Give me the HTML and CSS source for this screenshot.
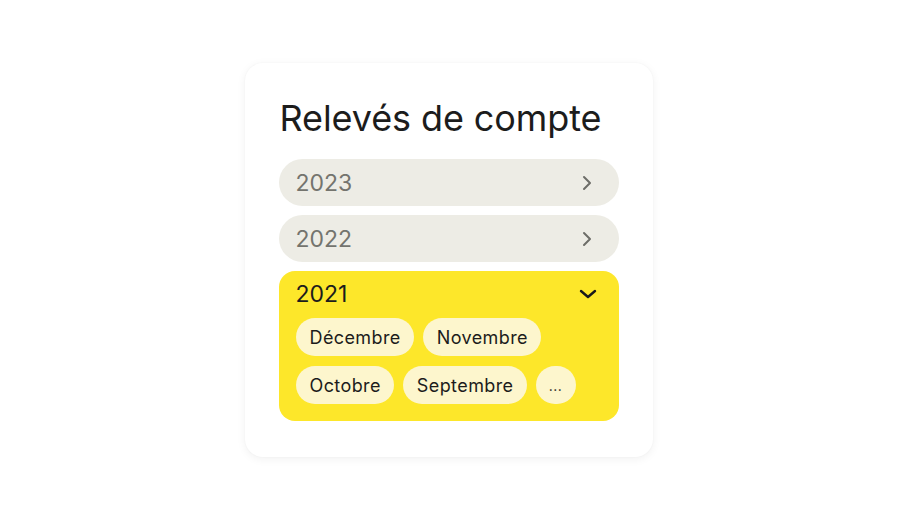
FILE: index.html
```html
<!DOCTYPE html>
<html lang="fr">
<head>
<meta charset="utf-8">
<link rel="stylesheet" href="styles.css">
</head>
<body>
<div class="stage">
  <div class="card">
    <h1 class="title">Relevés de compte</h1>
    <div class="list">
      <div class="row">
        <span class="year">2023</span>
        <svg class="chev" width="14" height="16" viewBox="0 0 14 16"><path d="M4 2 L10 8 L4 14" fill="none" stroke="#6d6d68" stroke-width="2" stroke-linecap="round" stroke-linejoin="round"/></svg>
      </div>
      <div class="row">
        <span class="year">2022</span>
        <svg class="chev" width="14" height="16" viewBox="0 0 14 16"><path d="M4 2 L10 8 L4 14" fill="none" stroke="#6d6d68" stroke-width="2" stroke-linecap="round" stroke-linejoin="round"/></svg>
      </div>
      <div class="open">
        <div class="open-head">
          <span class="year dark">2021</span>
          <svg class="chev-down" width="20" height="12" viewBox="0 0 20 12"><path d="M3 3 L10 9 L17 3" fill="none" stroke="#1a1a1a" stroke-width="2.4" stroke-linecap="round" stroke-linejoin="round"/></svg>
        </div>
        <div class="chips">
          <span class="chip">Décembre</span>
          <span class="chip">Novembre</span>
          <span class="chip">Octobre</span>
          <span class="chip">Septembre</span>
          <span class="chip more">...</span>
        </div>
      </div>
    </div>
  </div>
</div>
</body>
</html>
```
FILE: styles.css
```css
html, body {
  margin: 0;
  padding: 0;
  background: #ffffff;
}
body {
  width: 900px;
  height: 514px;
  font-family: Inter, "Liberation Sans", sans-serif;
  color: #1c1c1c;
}
.stage {
  display: flex;
  justify-content: center;
  padding-top: 63px;
}
.card {
  width: 408px;
  box-sizing: border-box;
  margin-left: -3px;
  padding: 34px 34px 36px 34px;
  background: #ffffff;
  border-radius: 18px;
  box-shadow: 0 2px 10px rgba(0, 0, 0, 0.06), 0 0 2px rgba(0,0,0,0.04);
}
.title {
  margin: 0 0 20px 0;
  padding-left: 1px;
  font-size: 36px;
  font-weight: 400;
  letter-spacing: -0.1px;
  line-height: 42px;
  color: #1c1c1c;
}
.list {
  display: flex;
  flex-direction: column;
  gap: 9px;
}
.row {
  height: 47px;
  border-radius: 24px;
  background: #edece5;
  display: flex;
  align-items: center;
  justify-content: space-between;
  padding: 0 25px 0 17px;
}
.year {
  font-size: 23px;
  color: #74746e;
  letter-spacing: 0;
}
.year.dark {
  color: #1c1c1c;
}
.open {
  background: #fde72a;
  border-radius: 16px;
  padding: 10px 21px 17px 17px;
}
.open-head {
  display: flex;
  align-items: center;
  justify-content: space-between;
  height: 26px;
  margin-bottom: 11px;
}
.chips {
  display: flex;
  flex-wrap: wrap;
  gap: 10px 9px;
  width: 300px;
}
.chip {
  height: 38px;
  border-radius: 19px;
  background: #fdf6cd;
  padding: 0 13px 0 14px;
  display: flex;
  align-items: center;
  font-size: 18px;
  letter-spacing: 0.4px;
  color: #1c1c1c;
}
.chip.more {
  width: 40px;
  padding: 0;
  justify-content: center;
  font-size: 14px;
}
```
